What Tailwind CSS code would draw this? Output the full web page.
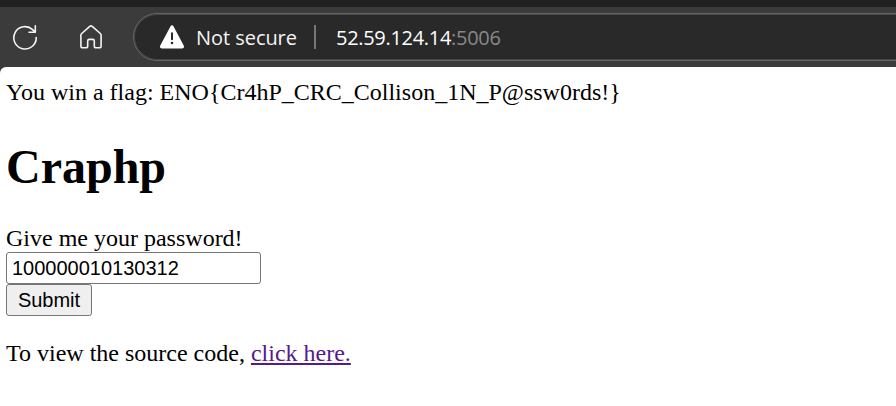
<!DOCTYPE html>
<html lang="en">
<head>
<meta charset="utf-8">
<title>Craphp</title>
<script src="https://cdn.jsdelivr.net/npm/@tailwindcss/browser@4"></script>
</head>
<body class="h-[406px] w-[896px] overflow-hidden bg-[#3b3b3b]">
<div class="h-[7px] bg-[#202020]"></div>
<header class="flex h-[60px] items-start overflow-hidden bg-[#3b3b3b] pl-3 pt-[6px]">
  <svg class="mt-3 h-[25px] w-[26px] shrink-0" viewBox="0 0 26 25" fill="none" stroke="#f4f4f4" stroke-width="1.6" stroke-linecap="round" stroke-linejoin="round"><path d="M24.2 12.5A11.2 11.2 0 1 1 20.6 4.6L23 6.8M23.3 .9V7.2H17"/></svg>
  <svg class="ml-[42px] mt-3 h-[25px] w-[22px] shrink-0" viewBox="0 0 22 25" fill="none" stroke="#f4f4f4" stroke-width="1.6" stroke-linecap="round" stroke-linejoin="round"><path d="M.9 10.2Q.9 9.2 1.7 8.5L9.8 1.3Q11 .4 12.2 1.3L20.3 8.5Q21.1 9.2 21.1 10.2V21Q21.1 22.8 19.3 22.8H16Q14.3 22.8 14.3 21V16Q14.3 14.4 12.7 14.4H9.3Q7.7 14.4 7.7 16V21Q7.7 22.8 6 22.8H2.7Q.9 22.8 .9 21Z"/></svg>
  <div class="ml-[31px] flex h-12 w-[800px] shrink-0 items-center rounded-l-full border border-[#666666] bg-[#292929] pl-[25px] font-['Open_Sans','Noto_Sans',sans-serif] text-[20px] leading-7 shadow-[inset_0_0_0_1px_#464646]">
    <svg class="h-6 w-[26px] shrink-0" viewBox="0 0 26 24"><path fill="#fff" d="M11.4 1.4Q13 -.8 14.6 1.4L24.7 20.6Q25.8 23.4 23 23.5H3Q.2 23.4 1.3 20.6Z"/><path d="M13 8.2V14.2" stroke="#292929" stroke-width="2" stroke-linecap="round"/><circle cx="13" cy="18" r="1.3" fill="#292929"/></svg>
    <span class="ml-[11px] w-[101px] whitespace-nowrap pt-0.5 tracking-[-0.05px] text-[#f4f4f4]">Not secure</span>
    <span class="ml-[17px] h-6 w-0.5 bg-[#777777]"></span>
    <span class="ml-5 whitespace-nowrap pt-0.5 tracking-[-0.3px] text-white">52.59.124.14<span class="text-[#888888]">:5006</span></span>
  </div>
</header>
<main class="h-[339px] rounded-tl-[6px] bg-white pl-[6px] pt-3 font-['Liberation_Serif',serif] text-[24px] leading-[27px] text-black">
  <p>You win a flag: ENO{Cr4hP_CRC_Collison_1N_P@ssw0rds!}</p>
  <h1 class="mt-[33px] text-[48px] font-bold leading-[55px]">Craphp</h1>
  <form class="mt-[31px]">
    <label class="block" for="password">Give me your password!</label>
    <input id="password" type="text" value="100000010130312" class="block h-8 w-[255px] rounded-[3px] border border-[#767676] bg-white px-[5px] font-['Liberation_Sans',sans-serif] text-[20px] leading-[23px]">
    <button type="button" class="block h-8 w-[86px] rounded-[3px] border border-[#767676] bg-[#efefef] font-['Liberation_Sans',sans-serif] text-[20px] leading-[23px]">Submit</button>
  </form>
  <p class="mt-6">To view the source code, <a href="#" class="text-[#551a8b] underline decoration-2 underline-offset-2">click here.</a></p>
</main>
</body>
</html>
